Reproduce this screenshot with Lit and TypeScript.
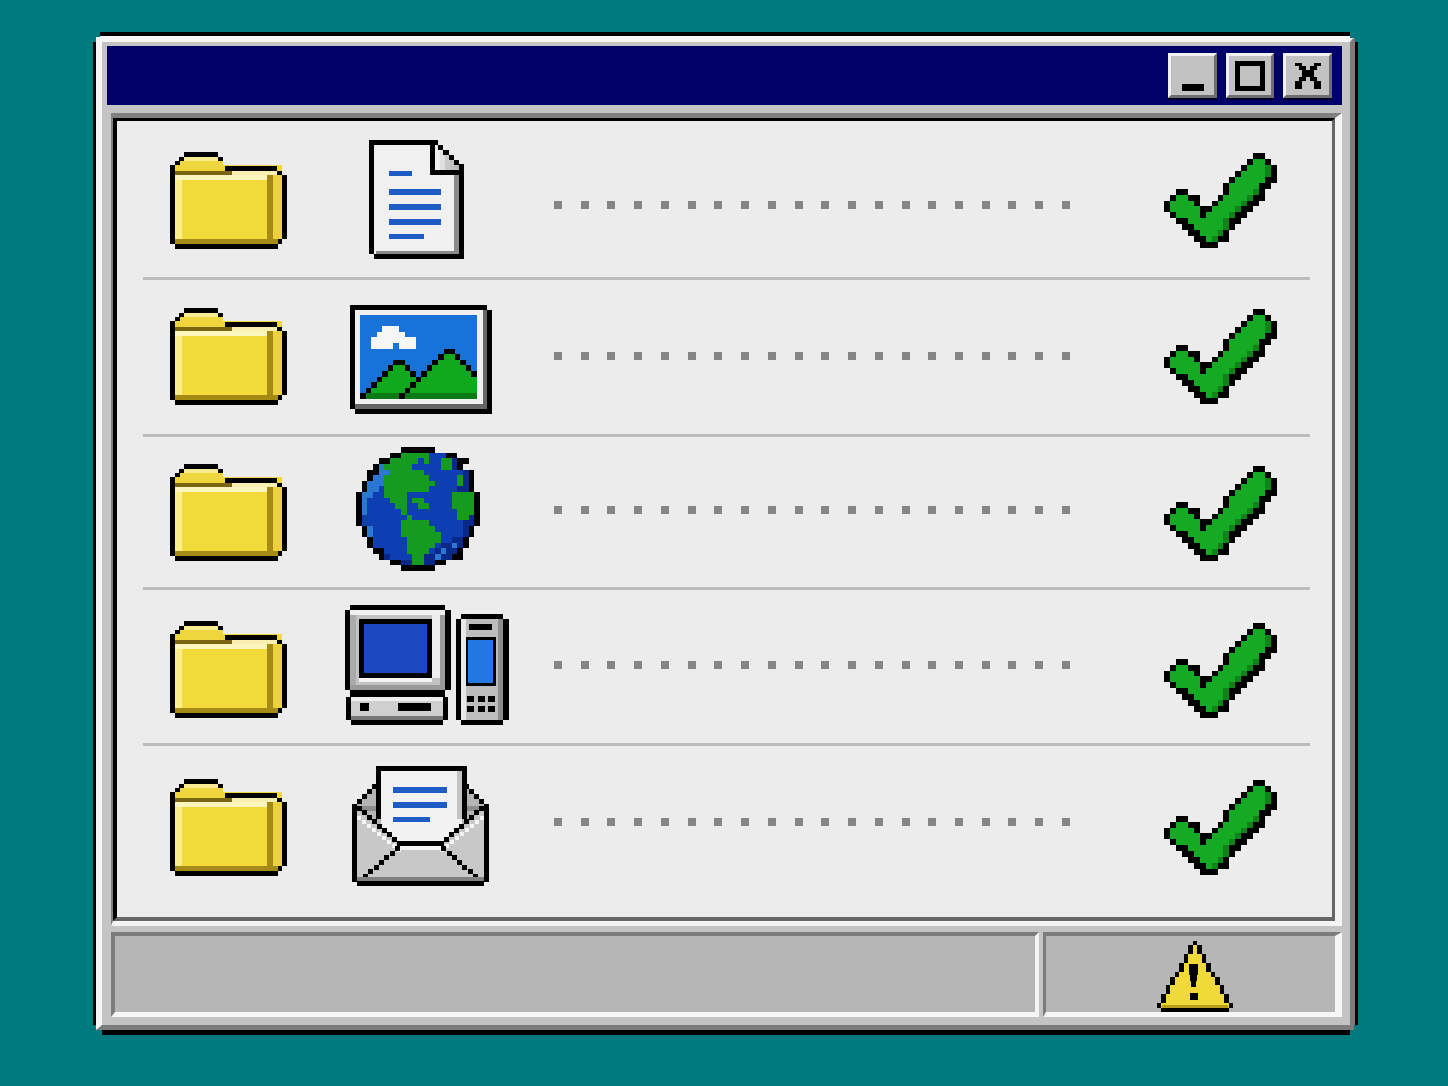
import { LitElement, html, css, svg } from "lit";
import { customElement } from "lit/decorators.js";

type Palette = Record<string, string>;

const pix = (map: string[], pal: Palette) =>
  map.flatMap((row, y) => {
    const out: unknown[] = [];
    let x = 0;
    while (x < row.length) {
      const c = row[x];
      let e = x;
      while (e < row.length && row[e] === c) e++;
      if (pal[c]) out.push(svg`<rect x=${x} y=${y} width=${e - x} height="1" fill=${pal[c]} />`);
      x = e;
    }
    return out;
  });

const box = (x: number, y: number, w: number, h: number, fill: string) =>
  svg`<rect x=${x} y=${y} width=${w} height=${h} fill=${fill} />`;

const diag = (x: number, y: number, sx: number, sy: number, n: number, size: number, fill: string) =>
  Array.from({ length: n }, (_, i) => box(x + sx * i, y + sy * i, size, size, fill));

const folderIcon = () => html`<svg class="px" width="117" height="97" viewBox="0 0 117 97" shape-rendering="crispEdges">
  ${box(5, 13, 107, 79, "#f0d83c")}
  ${box(14, 0, 34, 5, "#000")} ${box(9, 5, 5, 4, "#000")} ${box(5, 9, 5, 4, "#000")}
  ${box(48, 5, 5, 9, "#000")} ${box(53, 14, 54, 5, "#000")} ${box(107, 19, 5, 4, "#000")}
  ${box(0, 13, 5, 79, "#000")} ${box(112, 23, 5, 64, "#000")} ${box(5, 92, 103, 5, "#000")} ${box(108, 87, 4, 5, "#000")}
  ${box(14, 5, 34, 4, "#f8ec90")} ${box(10, 9, 43, 10, "#efd63e")}
  ${box(5, 13, 50, 6, "#efd63e")} ${box(5, 19, 57, 4, "#7a6612")}
  ${box(62, 19, 45, 4, "#f8efb0")} ${box(107, 23, 5, 4, "#f3e38a")}
  ${box(5, 23, 92, 5, "#fcf6bc")} ${box(5, 28, 7, 59, "#f9ee88")} ${box(12, 28, 85, 59, "#f2da3a")}
  ${box(97, 23, 6, 64, "#a58a16")} ${box(103, 23, 9, 64, "#ecd23e")}
  ${box(5, 87, 103, 5, "#a58a16")}
</svg>`;

const docIcon = () => html`<svg class="px" width="95" height="119" viewBox="0 0 95 119" shape-rendering="crispEdges">
  ${box(5, 5, 85, 109, "#f0f0f0")}
  ${box(0, 0, 5, 114, "#000")} ${box(0, 0, 69, 5, "#000")} ${box(5, 114, 90, 5, "#000")} ${box(90, 27, 5, 92, "#000")}
  ${box(85, 35, 5, 79, "#8a8a8a")} ${box(7, 111, 83, 3, "#8a8a8a")}
  ${box(66, 5, 24, 25, "#ececec")}
  ${box(69, 5, 21, 22, "#ececec")}
  ${box(66, 10, 5, 20, "#f0f0f0")}
  ${box(71, 10, 5, 20, "#e0e0e0")} ${box(76, 15, 5, 15, "#cacaca")} ${box(81, 20, 5, 10, "#c0c0c0")} ${box(86, 25, 4, 5, "#b8b8b8")}
  ${box(76, 5, 19, 5, "#ececec")} ${box(81, 10, 14, 5, "#ececec")} ${box(86, 15, 9, 5, "#ececec")} ${box(90, 20, 5, 7, "#ececec")}
  ${box(69, 5, 5, 5, "#000")} ${box(74, 10, 6, 5, "#000")} ${box(80, 15, 5, 5, "#000")} ${box(85, 20, 5, 5, "#000")} ${box(90, 24, 5, 5, "#000")}
  ${box(61, 5, 5, 30, "#000")} ${box(61, 30, 29, 5, "#000")}
  ${box(20, 31, 23, 5, "#1c5cc4")} ${box(20, 49, 52, 6, "#1c5cc4")} ${box(20, 64, 52, 6, "#1c5cc4")} ${box(20, 79, 52, 6, "#1c5cc4")} ${box(20, 94, 35, 5, "#1c5cc4")}
</svg>`;

const pictureMap = [
  "SSSSSSSSSSSSSSSSSSSSS",
  "SSSSSSSSSSSSSSSSSSSSS",
  "SSSSWWWSSSSSSSSSSSSSS",
  "SSSWWWWWSSSSSSSSSSSSS",
  "SSWWWWWWWWSSSSSSSSSSS",
  "SSWWWWSWWWSSSSSSSSSSS",
  "SSSSSSSSSSSSSSSKKSSSS",
  "SSSSSSSSSSSSSSKGGKSSS",
  "SSSSSSKKSSSSSKGGGGKSS",
  "SSSSSKGGKSSSKGGGGGGKS",
  "SSSSKGGGGKSKGGGGGGGGK",
  "SSSKGGGGGGKGGGGGGGGGG",
  "SSKGGGGGGKGGGGGGGGGGG",
  "SKGGGGGGKGGGGGGGGGGGG",
  "KDDDDDDKDDDDDDDDDDDDD",
];

const pictureIcon = () => html`<svg class="px" width="142" height="109" viewBox="0 0 142 109" shape-rendering="crispEdges">
  ${box(5, 5, 128, 94, "#f0f0f0")}
  ${box(0, 0, 137, 5, "#000")} ${box(0, 0, 5, 104, "#000")} ${box(137, 5, 5, 104, "#000")} ${box(5, 104, 137, 5, "#000")}
  ${box(133, 5, 4, 99, "#666")} ${box(5, 99, 132, 5, "#666")}
  <svg x="10" y="10" width="117" height="84" viewBox="0 0 21 15" preserveAspectRatio="none">
    ${pix(pictureMap, { S: "#1872d8", W: "#f6f6f6", K: "#000", G: "#10a81c", D: "#0a7a14" })}
  </svg>
</svg>`;

const globeMap = [
  "........KKKKKK........",
  "......KKGGGGGBBBKK....",
  "....KKGGGGGBGBBGGDKK..",
  "...KLGGGGGBBBBBGGDK...",
  "..KKLLGGGGGGBBBBBBBDK.",
  "..KLLGGGGGGGGBBBBBGDK.",
  ".KLLLGGGGGGGGGBBBBGDK.",
  ".KLLBGGGGGGGGBBBBBDDK.",
  "KLLBBGGGGBBBBBBBBGGGGK",
  "KLBBBBGGGBGGBBBBBGGGGK",
  "KLBBBBBGGBBGGBBBBGGGGK",
  "KLBBBBBBGBBBBBBBBBGGGK",
  "KBBBBBBBBGBBBBBBBBGGDK",
  "KBBBBBBBGGGGGBBBBBBDDK",
  ".KLBBBBBGGGGGGBBBBBDK.",
  ".KLBBBBBGGGGGGGBBBBDK.",
  "..KBBBBBBGGGGGGBBDDK..",
  "..KBBBBBBGGGGGBDDLDK..",
  "...KKBBBBGGGGBDLDDK...",
  "....KDBBBBGGDDLDDKK...",
  "......KKDDGGDDKK......",
  "........KKKKKK........",
];

const globeIcon = () => html`<svg class="px" width="124" height="124" viewBox="0 0 22 22" shape-rendering="crispEdges">
  ${pix(globeMap, { K: "#000", B: "#0d3fb2", G: "#159c20", L: "#2b78d4", D: "#0a2888" })}
</svg>`;

const computerIcon = () => html`<svg class="px" width="164" height="120" viewBox="0 0 164 120" shape-rendering="crispEdges">
  ${box(5, 5, 95, 80, "#c2c2c2")}
  ${box(5, 0, 95, 5, "#000")} ${box(0, 5, 5, 80, "#000")} ${box(100, 5, 6, 80, "#000")} ${box(5, 85, 95, 7, "#000")}
  ${box(5, 5, 95, 5, "#f0f0f0")} ${box(87, 10, 8, 63, "#eeeeee")} ${box(14, 73, 73, 4, "#f4f4f4")} ${box(5, 10, 6, 70, "#aaaaaa")}
  ${box(95, 10, 5, 70, "#9a9a9a")} ${box(5, 80, 95, 5, "#9a9a9a")}
  ${box(14, 14, 73, 59, "#000")} ${box(19, 19, 63, 49, "#1a48c0")}
  ${box(6, 92, 92, 23, "#cfcfcf")}
  ${box(1, 92, 5, 23, "#000")} ${box(98, 92, 5, 23, "#000")} ${box(6, 115, 92, 5, "#000")}
  ${box(6, 92, 92, 4, "#f0f0f0")} ${box(6, 111, 92, 4, "#777")}
  ${box(15, 98, 9, 8, "#000")} ${box(53, 98, 33, 8, "#000")}
  ${box(116, 14, 42, 101, "#bdbdbd")} ${box(116, 14, 5, 101, "#e8e8e8")} ${box(153, 14, 5, 101, "#8c8c8c")}
  ${box(111, 14, 5, 101, "#000")} ${box(116, 9, 42, 5, "#000")} ${box(158, 14, 6, 101, "#000")} ${box(116, 115, 42, 5, "#000")}
  ${box(124, 19, 23, 6, "#000")}
  ${box(121, 32, 30, 49, "#000")} ${box(123, 35, 25, 43, "#2278e0")}
  ${[122, 133, 143].flatMap((x) => [box(x, 91, 7, 6, "#000"), box(x, 101, 7, 6, "#000")])}
</svg>`;

const mailIcon = () => html`<svg class="px" width="137" height="120" viewBox="0 0 137 120" shape-rendering="crispEdges">
  <polygon points="5,38 24,20 115,20 132,38 132,60 5,60" fill="#b4b4b4" />
  ${diag(5, 33, 5, -5, 4, 5, "#000")} ${diag(127, 33, -5, -5, 4, 5, "#000")}
  ${box(5, 40, 20, 5, "#8c8c8c")} ${box(112, 40, 20, 5, "#8c8c8c")}
  ${box(24, 0, 91, 5, "#000")} ${box(24, 5, 5, 48, "#000")} ${box(110, 5, 5, 48, "#000")}
  ${box(29, 5, 81, 74, "#f2f2f2")} ${box(105, 5, 5, 48, "#c4c4c4")}
  ${box(41, 21, 54, 6, "#1c5cc4")} ${box(41, 36, 54, 6, "#1c5cc4")} ${box(41, 51, 37, 5, "#1c5cc4")}
  <polygon points="5,43 48,79 89,79 132,43 132,115 5,115" fill="#c8c8c8" />
  ${diag(5, 50, 5, 4, 9, 4, "#f6f6f6")} ${diag(128, 50, -5, 4, 9, 4, "#f6f6f6")}
  ${box(48, 79, 41, 5, "#f4f4f4")}
  ${diag(5, 40, 5, 4.4, 9, 5, "#000")} ${diag(127, 40, -5, 4.4, 9, 5, "#000")}
  ${box(48, 75, 41, 5, "#000")}
  ${diag(11, 108, 5.3, -4.7, 7, 5, "#000")} ${diag(121, 108, -5.3, -4.7, 7, 5, "#000")}
  ${box(5, 111, 127, 4, "#808080")}
  ${box(0, 38, 5, 78, "#000")} ${box(132, 38, 5, 78, "#000")} ${box(5, 115, 127, 5, "#000")}
</svg>`;

const checkMap = [
  "...............KK..",
  "..............KGGK.",
  ".............KGGGDK",
  "............KGGGGDK",
  "...........KGGGGGKK",
  "..........KGGGGGKK.",
  "..KK......KGGGGDK..",
  ".KGGKK...KGGGGDKK..",
  "KGGGGK..KGGGGDKK...",
  "KGGGGGKKGGGGDKK....",
  ".KGGGGKGGGGDKK.....",
  "..KKGGGGGGDKK......",
  "...KKGGGGGDK.......",
  "....KKGGGDK........",
  ".....KKGDKK........",
  "......KKK..........",
];

const checkIcon = () => html`<svg class="px" width="113" height="95" viewBox="0 0 19 16" shape-rendering="crispEdges">
  ${pix(checkMap, { K: "#000", G: "#15aa24", D: "#0e8418" })}
</svg>`;

const triMap = Array.from({ length: 16 }, (_, r) => {
  if (r === 15) return ".KKKKKKKKKKKKKKK.";
  const half = Math.round(r * 0.57);
  const row = Array(17).fill(".");
  for (let i = 8 - half; i <= 8 + half; i++) row[i] = "Y";
  row[8 - half] = "K";
  row[8 + half] = "K";
  return row.join("");
});

const warnIcon = () => html`<svg class="px" width="76" height="71" viewBox="0 0 76 71" shape-rendering="crispEdges">
  <svg width="76" height="71" viewBox="0 0 17 16" preserveAspectRatio="none">
    ${pix(triMap, { K: "#000", Y: "#f2d93a" })}
  </svg>
  ${box(5, 64, 66, 3, "#b89e1c")}
  ${box(32, 23, 9, 11, "#000")} ${box(33, 34, 7, 6, "#000")} ${box(34, 40, 5, 6, "#000")}
  ${box(33, 52, 8, 7, "#000")}
</svg>`;

const xMap = ["KK...KK", ".KK.KK.", "..KKK..", "..KKK..", ".KK.KK.", "KK...KK", "KK...KK"];

interface Row {
  height: number;
  folder: number;
  icon: number;
  iconLeft: number;
  dots: number;
  check: number;
  render: () => unknown;
}

const rows: Row[] = [
  { height: 159, folder: 31, icon: 19, iconLeft: 82, dots: 80, check: 32, render: docIcon },
  { height: 157, folder: 28, icon: 25, iconLeft: 63, dots: 72, check: 29, render: pictureIcon },
  { height: 153, folder: 27, icon: 10, iconLeft: 69, dots: 69, check: 29, render: globeIcon },
  { height: 156, folder: 31, icon: 15, iconLeft: 58, dots: 71, check: 33, render: computerIcon },
  { height: 171, folder: 33, icon: 20, iconLeft: 65, dots: 72, check: 34, render: mailIcon },
];

@customElement("app-root")
export class AppRoot extends LitElement {
  static styles = css`
    :host {
      display: block;
      box-sizing: border-box;
      width: 1448px;
      height: 1086px;
      padding: 32px 0 0 93px;
      background: #007a7f;
      overflow: hidden;
      font-family: "Liberation Sans", sans-serif;
    }
    .px { display: block; }
    .stage { filter: blur(0.5px); }
    .window {
      box-sizing: border-box;
      width: 1265px;
      height: 1003px;
      padding: 4px 3px 5px;
      background: #000;
      clip-path: polygon(7px 0, 1257px 0, 1257px 6px, 1262px 6px, 1262px 10px, 1265px 10px, 1265px 993px, 1261px 993px, 1261px 998px, 1257px 998px, 1257px 1003px, 9px 1003px, 9px 998px, 3px 998px, 3px 993px, 0 993px, 0 10px, 3px 10px, 3px 5px, 7px 5px);
    }
    .frame {
      box-sizing: border-box;
      height: 100%;
      display: flex;
      flex-direction: column;
      padding: 4px 8px 8px 5px;
      background: #c4c4c4;
      border-style: solid;
      border-width: 6px 5px 5px 6px;
      border-color: #f6f6f6 #7c7c7c #7c7c7c #f6f6f6;
    }
    .title {
      flex: none;
      height: 59px;
      display: flex;
      justify-content: flex-end;
      align-items: center;
      gap: 9px;
      padding-right: 10px;
      background: #000068;
    }
    .btn {
      box-sizing: border-box;
      width: 49px;
      height: 45px;
      display: flex;
      align-items: center;
      justify-content: center;
      background: #c2c2c2;
      border-style: solid;
      border-width: 3px;
      border-color: #f0f0f0 #6e6e6e #6e6e6e #f0f0f0;
      box-shadow: 0 2px 0 #00002a;
    }
    .btn.mid { width: 48px; }
    .glyph-min {
      width: 22px;
      height: 7px;
      margin-top: 24px;
      background: #000;
    }
    .glyph-max {
      box-sizing: border-box;
      width: 30px;
      height: 30px;
      margin-top: 1px;
      border: 5px solid #000;
    }
    .sunken {
      flex: none;
      height: 813px;
      box-sizing: border-box;
      margin: 8px 0 0 4px;
      border-style: solid;
      border-width: 5px 7px 5px 2px;
      border-color: #808080 #f4f4f4 #f4f4f4 #808080;
    }
    .list {
      box-sizing: border-box;
      height: 100%;
      background: #ececec;
      border-style: solid;
      border-width: 3px 3px 4px 4px;
      border-color: #000 #666 #666 #000;
    }
    .row {
      box-sizing: border-box;
      display: grid;
      grid-template-columns: 117px 267px 610px 113px;
      align-items: start;
      margin: 0 22px 0 26px;
      padding-left: 27px;
      border-bottom: 3px solid #bcbcbc;
    }
    .row:last-child { border-bottom: none; }
    .dots {
      width: 516px;
      display: flex;
      justify-content: space-between;
    }
    .dot {
      width: 8px;
      height: 8px;
      background: #858585;
    }
    .status {
      flex: 1;
      display: flex;
      gap: 4px;
      margin: 6px 0 0 4px;
    }
    .panel {
      box-sizing: border-box;
      background: #b6b6b6;
      border-style: solid;
      border-color: #7c7c7c #f6f6f6 #f6f6f6 #7c7c7c;
    }
    .panel.main {
      width: 928px;
      border-width: 4px 4px 5px 4px;
    }
    .panel.side {
      flex: 1;
      display: flex;
      justify-content: flex-start;
      align-items: flex-end;
      padding-left: 111px;
      border-width: 4px 7px 5px 3px;
    }
  `;

  render() {
    return html`
      <div class="stage">
        <div class="window">
          <div class="frame">
            <div class="title">
              <div class="btn"><div class="glyph-min"></div></div>
              <div class="btn mid"><div class="glyph-max"></div></div>
              <div class="btn">
                <svg class="px" width="26" height="27" viewBox="0 0 7 7" shape-rendering="crispEdges">
                  ${pix(xMap, { K: "#000" })}
                </svg>
              </div>
            </div>
            <div class="sunken">
              <div class="list">
                ${rows.map(
                  (r) => html`
                    <div class="row" style="height:${r.height}px">
                      <div style="margin-top:${r.folder}px">${folderIcon()}</div>
                      <div style="margin-top:${r.icon}px;margin-left:${r.iconLeft}px">${r.render()}</div>
                      <div class="dots" style="margin-top:${r.dots}px">
                        ${Array.from({ length: 20 }, () => html`<span class="dot"></span>`)}
                      </div>
                      <div style="margin-top:${r.check}px">${checkIcon()}</div>
                    </div>
                  `
                )}
              </div>
            </div>
            <div class="status">
              <div class="panel main"></div>
              <div class="panel side">${warnIcon()}</div>
            </div>
          </div>
        </div>
      </div>
    `;
  }
}
